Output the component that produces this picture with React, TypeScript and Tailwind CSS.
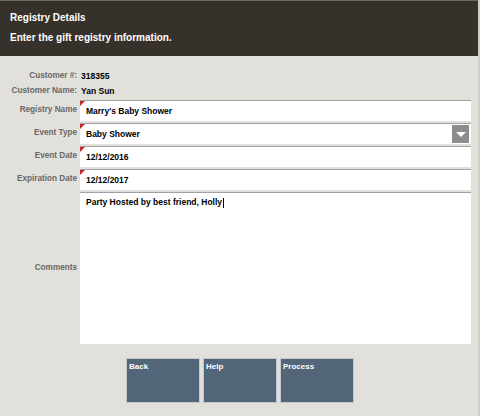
import React from "react";

const FONT = { fontFamily: '"Liberation Sans", Arial, sans-serif' };

const Marker = () => (
  <span className="absolute left-0 top-0 w-0 h-0 border-t-[5px] border-r-[5px] border-t-[#c0282a] border-r-transparent" />
);

const Field = ({ label, value, select }: { label: string; value: string; select?: boolean }) => (
  <div className="flex items-stretch h-[21px]">
    <div className="w-[80px] shrink-0 pr-[3px] flex items-center justify-end text-[8.2px] font-bold text-[#686868]">
      {label}
    </div>
    <div className="relative flex-1 bg-white border-t border-[#a3a3a3] flex items-center pl-[6px] text-[8.5px] font-bold text-black">
      <Marker />
      {value}
      {select && (
        <span className="absolute right-[2px] top-[1px] w-[17px] h-[18px] bg-[#8c8c8c] flex items-center justify-center">
          <span className="w-0 h-0 border-l-[5px] border-r-[5px] border-t-[5px] border-l-transparent border-r-transparent border-t-white" />
        </span>
      )}
    </div>
  </div>
);

export default function App() {
  return (
    <div style={FONT} className="w-[480px] h-[416px] bg-[#e1e0db] flex flex-col border-r-2 border-[#cfcdc6] overflow-hidden">
      {/* Header */}
      <div className="h-[56px] bg-[#36322b] border-t border-[#6e6a62] flex flex-col pl-[10px] pt-[11px] gap-[8px] text-white font-bold text-[10px]">
        <div className="leading-[12px]">Registry Details</div>
        <div className="leading-[12px]">Enter the gift registry information.</div>
      </div>

      {/* Form */}
      <div className="flex flex-col pt-[13px] pr-[7px]">
        <div className="flex h-[15px] items-center">
          <div className="w-[77px] text-right text-[8.2px] font-bold text-[#686868]">Customer #:</div>
          <div className="pl-[4px] text-[8.5px] font-bold text-black">318355</div>
        </div>
        <div className="flex h-[15px] items-center">
          <div className="w-[77px] text-right text-[8.2px] font-bold text-[#686868]">Customer Name:</div>
          <div className="pl-[4px] text-[8.5px] font-bold text-black">Yan Sun</div>
        </div>
        <div className="flex flex-col gap-[2px] mt-[1px]">
          <Field label="Registry Name" value="Marry's Baby Shower" />
          <Field label="Event Type" value="Baby Shower" select />
          <Field label="Event Date" value="12/12/2016" />
          <Field label="Expiration Date" value="12/12/2017" />
          <div className="flex items-stretch h-[152px]">
            <div className="w-[80px] shrink-0 pr-[3px] flex items-center justify-end text-[8.2px] font-bold text-[#686868]">
              Comments
            </div>
            <div className="flex-1 bg-white border-t border-[#a3a3a3] pl-[6px] pt-[3px] text-[8.5px] font-bold text-black leading-[12px]">
              Party Hosted by best friend, Holly
              <span className="inline-block w-px h-[10px] bg-black align-middle ml-px" />
            </div>
          </div>
        </div>
      </div>

      {/* Buttons */}
      <div className="flex gap-[3px] pl-[126px] mt-[14px]">
        {["Back", "Help", "Process"].map((b) => (
          <button
            key={b}
            className="w-[74px] h-[45px] bg-[#536679] border border-[#c3c7cb] flex items-start px-[2px] pt-[2px] text-white font-bold text-[8px]"
          >
            {b}
          </button>
        ))}
      </div>
    </div>
  );
}
